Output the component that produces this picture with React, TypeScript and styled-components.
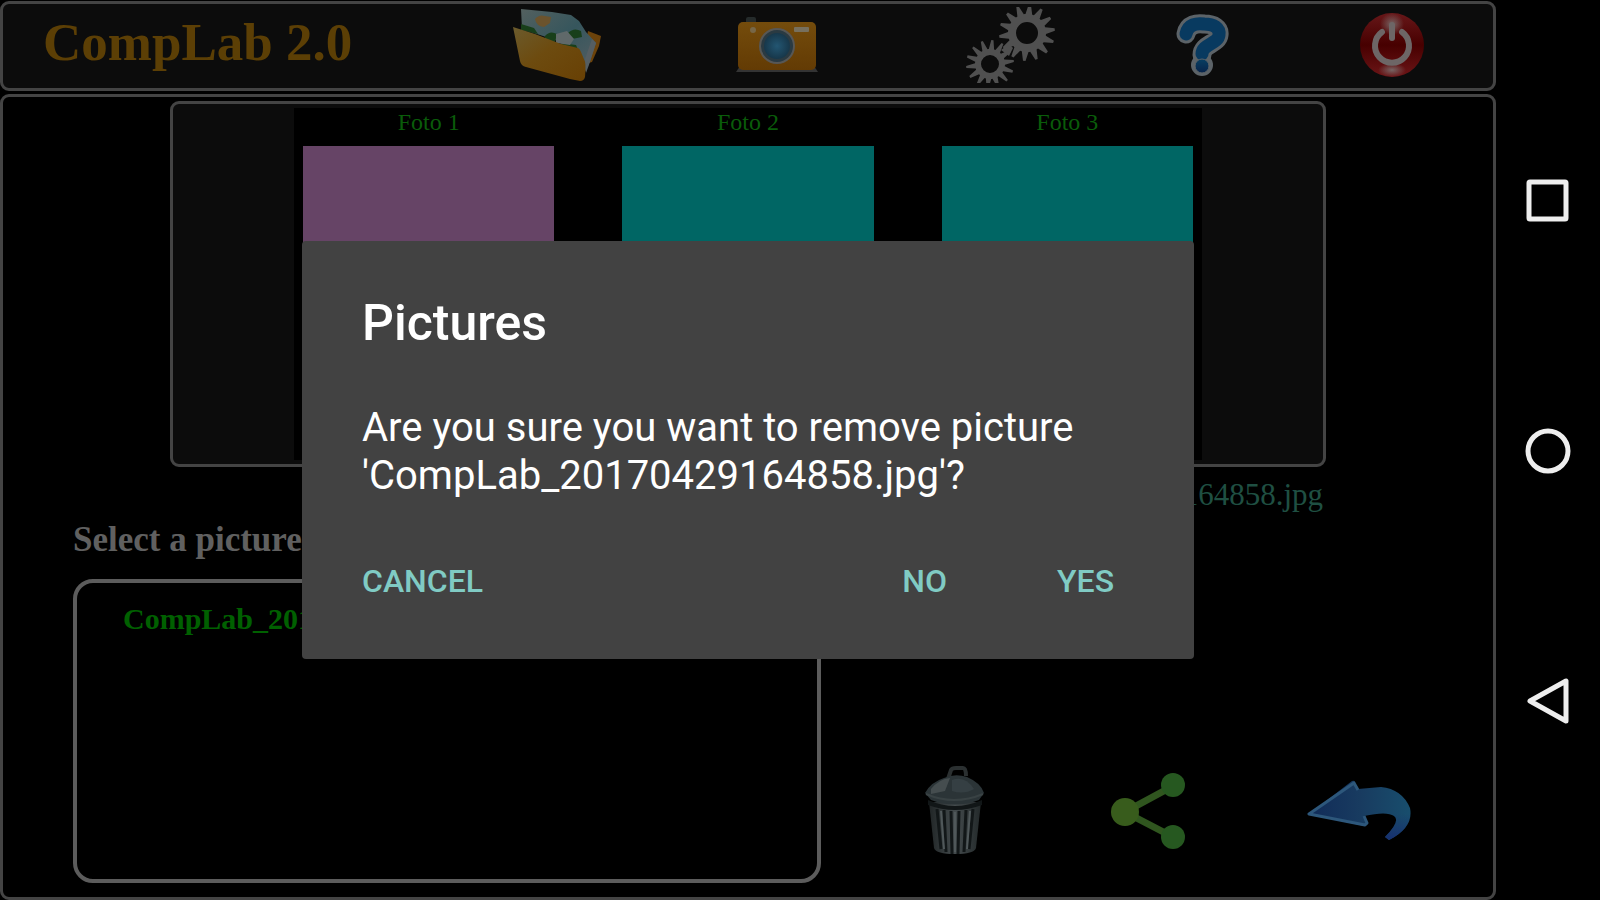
import React from "react";
import styled, { createGlobalStyle } from "styled-components";

const GlobalStyle = createGlobalStyle`
  * { box-sizing: border-box; }
  body { margin: 0; background: #000; }
  button { border: 0; padding: 0; background: none; cursor: pointer; }
`;

const serif = `"Liberation Serif", serif`;
const sans = `Roboto, "Liberation Sans", sans-serif`;

const Screen = styled.div`
  display: grid;
  grid-template-columns: 1fr 104px;
  min-height: 100vh;
  background: #000;
`;

const AppArea = styled.div`
  position: relative;
  display: flex;
  flex-direction: column;
  gap: 3px;
  min-width: 0;
  padding-top: 1px;
`;

const Toolbar = styled.header`
  display: grid;
  grid-template-columns: 464fr 180fr 260fr 208fr 176fr 202fr;
  align-items: center;
  height: 90px;
  padding-bottom: 2px;
  border: 3px solid #444;
  border-radius: 9px;
  background: #0c0c0c;
`;

const Brand = styled.h1`
  margin: 0;
  padding: 0 0 6px 40px;
  color: #5c3f05;
  font: 700 53px/56px ${serif};
  white-space: nowrap;
`;

const IconButton = styled.button`
  display: flex;
  justify-content: center;
  align-items: center;
  svg { display: block; }
`;

const Main = styled.main`
  flex: 1;
  display: flex;
  flex-direction: column;
  padding: 4px 0 14px 70px;
  border: 3px solid #444;
  border-radius: 9px;
`;

const Preview = styled.section`
  display: flex;
  justify-content: center;
  height: 366px;
  margin: 0 167px 0 97px;
  padding: 4px;
  border: 3px solid #444;
  border-radius: 9px;
  background: #0c0c0c;
`;

const Photos = styled.div`
  display: grid;
  grid-template-columns: repeat(3, 1fr);
  column-gap: 68px;
  width: 908px;
  max-width: 80%;
  padding: 0 9px;
  background: #000;
`;

const Photo = styled.figure`
  display: flex;
  flex-direction: column;
  margin: 0;
`;

const PhotoLabel = styled.figcaption`
  padding-bottom: 10px;
  color: #0a5c0a;
  font: 24px/28px ${serif};
  text-align: center;
`;

const Swatch = styled.div<{ $color: string }>`
  flex: 1;
  margin-bottom: 9px;
  background: ${(p) => p.$color};
`;

const FileName = styled.output`
  margin: 10px 170px 0 0;
  color: #1f4f42;
  font: 31px/36px ${serif};
  text-align: right;
`;

const ListLabel = styled.h2`
  margin: 7px 0 19px;
  color: #606060;
  font: 700 35px/40px ${serif};
`;

const Lower = styled.div`
  flex: 1;
  display: grid;
  grid-template-columns: 748fr 672fr;
`;

const FileList = styled.ul`
  margin: 0;
  padding: 18px 46px;
  border: 4px solid #5c5c5c;
  border-radius: 20px;
  list-style: none;
`;

const FileItem = styled.button`
  color: #006000;
  font: 700 30px/36px ${serif};
`;

const Actions = styled.div`
  display: grid;
  grid-template-columns: 228fr 158fr 266fr;
  align-content: end;
  align-items: center;
  padding: 0 0 27px 20px;
`;

const NavBar = styled.nav`
  display: flex;
  flex-direction: column;
  justify-content: space-around;
  padding: 76px 0 74px;
`;

const Overlay = styled.div`
  position: absolute;
  inset: 0;
  display: flex;
  align-items: center;
  justify-content: center;
`;

const Dialog = styled.div`
  width: 892px;
  max-width: 92%;
  padding: 52px 60px 46px;
  border-radius: 4px;
  background: #424242;
  color: #fff;
  font-family: ${sans};
`;

const DialogTitle = styled.h2`
  margin: 0 0 51px;
  font-size: 50px;
  line-height: 60px;
  font-weight: 500;
`;

const DialogText = styled.p`
  margin: 0 0 49px;
  font-size: 40px;
  line-height: 48px;
  overflow-wrap: anywhere;
`;

const DialogActions = styled.div`
  display: flex;
  gap: 110px;
  padding-right: 20px;
`;

const DialogButton = styled.button<{ $start?: boolean }>`
  margin-right: ${(p) => (p.$start ? "auto" : "0")};
  color: #80cbc4;
  font: 500 32px/64px ${sans};
`;

const gear = (cx: number, cy: number, outer: number, root: number, hole: number, teeth: number) => {
  const pts: string[] = [];
  for (let i = 0; i < teeth; i++) {
    const step = (Math.PI * 2) / teeth;
    [[-0.5, root], [-0.4, root], [-0.1, outer], [0.1, outer], [0.4, root]].forEach(([t, r]) => {
      const a = (i + t) * step - Math.PI / 2 + 0.1;
      pts.push(`${(cx + r * Math.cos(a)).toFixed(1)} ${(cy + r * Math.sin(a)).toFixed(1)}`);
    });
  }
  return `M${pts.join("L")}Z M${cx - hole} ${cy}a${hole} ${hole} 0 1 0 ${hole * 2} 0a${hole} ${hole} 0 1 0 ${-hole * 2} 0Z`;
};

const FolderIcon = () => (
  <svg width="90" height="76" viewBox="0 0 90 76" aria-hidden="true">
    <defs>
      <linearGradient id="folder" x1="0" y1="0" x2="1" y2="1">
        <stop offset="0" stopColor="#6b5b2d" />
        <stop offset=".45" stopColor="#6d4b0f" />
        <stop offset="1" stopColor="#684004" />
      </linearGradient>
      <linearGradient id="photo" x1="0" y1="0" x2="1" y2="1">
        <stop offset="0" stopColor="#53605f" />
        <stop offset=".5" stopColor="#36565d" />
        <stop offset="1" stopColor="#555e62" />
      </linearGradient>
    </defs>
    <path d="M76 24L89 29 87 39 80 55 70 58Z" fill="#6c430b" />
    <path d="M9 2L40 5 59 8 67 14 74 25 84 36 78 54 73 65 64 40 10 22Z" fill="url(#photo)" />
    <path d="M23 12Q27 7 33 9L39 10 38 16 32 20Q24 19 23 12Z" fill="#6b532d" />
    <path d="M9 17l13 4 4 6-17-4z M33 29q5-6 12-2l-2 8-10-2z M56 26q6-6 13-2l1 6-10 2z M49 36l15 2 3 7-18-5z" fill="#183f1a" />
    <path d="M44 27l11-3 7 8-4 6-14-2z" fill="#60696a" />
    <path d="M1 20L23 27 49 37 66 41Q68 42 69 45L74 57 73 70Q72 74 68 74L58 72 14 60Q9 59 8 54Z" fill="url(#folder)" />
    <path d="M73 52L80 32 84 36 78 55 74 66Z" fill="#555e62" />
  </svg>
);

const CameraIcon = () => (
  <svg width="82" height="58" viewBox="0 0 82 58" aria-hidden="true">
    <defs>
      <linearGradient id="body" x1="0" y1="0" x2="0" y2="1">
        <stop offset="0" stopColor="#744c0c" />
        <stop offset="1" stopColor="#633b04" />
      </linearGradient>
      <radialGradient id="lens">
        <stop offset="0" stopColor="#235672" />
        <stop offset="1" stopColor="#17374a" />
      </radialGradient>
    </defs>
    <rect x="10" y="1" width="10" height="8" rx="2" fill="#252b2b" />
    <path d="M0 56l4-6h74l4 6z" fill="#343434" />
    <rect x="2" y="6" width="78" height="48" rx="5" fill="url(#body)" />
    <circle cx="41" cy="30" r="18" fill="#575755" />
    <circle cx="41" cy="30" r="16" fill="#2a3a42" />
    <circle cx="41" cy="30" r="13" fill="url(#lens)" />
    <circle cx="17" cy="14" r="3" fill="#776747" />
    <rect x="58" y="11" width="15" height="5" rx="1" fill="#77705e" />
  </svg>
);

const GearsIcon = () => (
  <svg width="90" height="76" viewBox="0 0 90 76" aria-hidden="true">
    <g fill="#505050" fillRule="evenodd">
      <path d={gear(61, 26, 28, 19, 11, 14)} />
      <path d={gear(24, 57, 24, 15, 9, 14)} />
      <path d="M35 43l8-6 4 4-4 8z" />
    </g>
  </svg>
);

const HelpIcon = () => (
  <svg width="54" height="62" viewBox="0 0 54 62" aria-hidden="true">
    <defs>
      <linearGradient id="help" x1="0" y1="0" x2="0" y2="1">
        <stop offset="0" stopColor="#083f62" />
        <stop offset="1" stopColor="#08234a" />
      </linearGradient>
    </defs>
    <g fill="none" strokeLinecap="round" strokeLinejoin="round">
      <path d="M10 20C12 10 21 9 28 10C38 10 44 14 43 21C42 30 26 30 26 41" stroke="#5c6368" strokeWidth="19" />
      <circle cx="26" cy="51" r="11" fill="#5c6368" />
      <path d="M10 20C12 10 21 9 28 10C38 10 44 14 43 21C42 30 26 30 26 40" stroke="#083a60" strokeWidth="13" />
    </g>
    <circle cx="26" cy="52" r="7" fill="url(#help)" stroke="#5c6368" strokeWidth="1" />
  </svg>
);

const PowerIcon = () => (
  <svg width="64" height="64" viewBox="0 0 64 64" aria-hidden="true">
    <defs>
      <linearGradient id="red" x1="0" y1="0" x2="0" y2="1">
        <stop offset="0" stopColor="#671719" />
        <stop offset=".5" stopColor="#470000" />
        <stop offset="1" stopColor="#6c1517" />
      </linearGradient>
      <radialGradient id="shine">
        <stop offset="0" stopColor="#776463" />
        <stop offset="1" stopColor="#776463" stopOpacity="0" />
      </radialGradient>
    </defs>
    <circle cx="32" cy="32" r="32" fill="url(#red)" />
    <ellipse cx="32" cy="11" rx="12" ry="11" fill="url(#shine)" />
    <ellipse cx="32" cy="57" rx="14" ry="7" fill="url(#shine)" />
    <path d="M22 19A17 17 0 1 0 42 19" fill="none" stroke="#6d6666" strokeWidth="6" strokeLinecap="round" />
    <path d="M32 12v13" stroke="#6d6666" strokeWidth="6" strokeLinecap="round" />
  </svg>
);

const TrashIcon = () => (
  <svg width="62" height="90" viewBox="0 0 62 90" aria-hidden="true">
    <defs>
      <linearGradient id="can">
        <stop offset="0" stopColor="#202526" />
        <stop offset=".5" stopColor="#444b4d" />
        <stop offset="1" stopColor="#23292a" />
      </linearGradient>
    </defs>
    <path d="M5 36h52l-5 46q-2 6-21 6t-21-6z" fill="url(#can)" />
    <path d="M13 43l4 40M20 44l2 42M27 45l1 43M35 45l-1 43M42 44l-2 42M49 43l-4 40" stroke="#121718" strokeWidth="3" />
    <path d="M17 45l3 38M31 46v40M46 45l-3 38" stroke="#50585a" strokeWidth="2" />
    <path d="M4 34q27 12 54 0v5q-27 10-54 0z" fill="#111617" />
    <path d="M24 13l3-9q1-2 5-2h7q3 0 3 8" fill="none" stroke="#2b3031" strokeWidth="4" />
    <path d="M1 27Q7 16 20 12q11-5 23-1 14 6 17 16l-5 7q-24 9-48 0z" fill="#2b3437" />
    <path d="M7 23q8-10 19-11l-5 13-14 3z" fill="#454d4f" />
    <path d="M28 14q13-5 22 9-10 6-22 2z" fill="#353f43" />
    <path d="M2 28q28 12 57 0" fill="none" stroke="#394244" strokeWidth="2" />
  </svg>
);

const ShareIcon = () => (
  <svg width="74" height="76" viewBox="0 0 74 76" aria-hidden="true">
    <path d="M62 13L14 39 62 64" fill="none" stroke="#30561f" strokeWidth="7" />
    <circle cx="14" cy="39" r="14" fill="#385c1c" />
    <circle cx="62" cy="12" r="12" fill="#265820" />
    <circle cx="62" cy="64" r="12" fill="#265820" />
  </svg>
);

const BackIcon = () => (
  <svg width="106" height="64" viewBox="0 0 106 64" aria-hidden="true">
    <defs>
      <linearGradient id="arrow">
        <stop offset="0" stopColor="#112b58" />
        <stop offset=".5" stopColor="#183b60" />
        <stop offset="1" stopColor="#184e6d" />
      </linearGradient>
      <linearGradient id="tail" x1="0" y1="0" x2="0" y2="1">
        <stop offset=".5" stopColor="#1a3570" stopOpacity="0" />
        <stop offset="1" stopColor="#162f70" />
      </linearGradient>
    </defs>
    <path d="M2 35L45 2Q49 1 48 5L51 10 74 8Q95 10 103 29Q107 48 82 61L78 58Q94 42 87 37Q80 32 57 37L61 45 57 47Z" fill="url(#arrow)" />
    <path d="M74 8Q95 10 103 29Q107 48 82 61L78 58Q94 42 87 37Z" fill="url(#tail)" />
    <path d="M51 11L47 4 2 35 58 46 60 44 57 37" fill="none" stroke="#2d577b" strokeWidth="3" strokeLinejoin="round" />
  </svg>
);

const NavIcon = ({ children }: { children: React.ReactNode }) => (
  <svg width="46" height="50" viewBox="0 0 46 50" fill="none" stroke="#eee" strokeWidth="5" strokeLinejoin="round" aria-hidden="true">
    {children}
  </svg>
);

const photos = [
  { label: "Foto 1", color: "#664466" },
  { label: "Foto 2", color: "#006664" },
  { label: "Foto 3", color: "#006664" },
];

const file = "CompLab_20170429164858.jpg";

export default function App() {
  return (
    <Screen>
      <GlobalStyle />
      <AppArea>
        <Toolbar>
          <Brand>CompLab 2.0</Brand>
          <IconButton aria-label="Open pictures"><FolderIcon /></IconButton>
          <IconButton aria-label="Camera"><CameraIcon /></IconButton>
          <IconButton aria-label="Settings"><GearsIcon /></IconButton>
          <IconButton aria-label="Help"><HelpIcon /></IconButton>
          <IconButton aria-label="Exit"><PowerIcon /></IconButton>
        </Toolbar>
        <Main>
          <Preview>
            <Photos>
              {photos.map((p) => (
                <Photo key={p.label}>
                  <PhotoLabel>{p.label}</PhotoLabel>
                  <Swatch $color={p.color} />
                </Photo>
              ))}
            </Photos>
          </Preview>
          <FileName>{file}</FileName>
          <ListLabel>Select a picture</ListLabel>
          <Lower>
            <FileList>
              <li><FileItem>{file}</FileItem></li>
            </FileList>
            <Actions>
              <IconButton aria-label="Delete"><TrashIcon /></IconButton>
              <IconButton aria-label="Share"><ShareIcon /></IconButton>
              <IconButton aria-label="Back"><BackIcon /></IconButton>
            </Actions>
          </Lower>
        </Main>
        <Overlay>
          <Dialog role="dialog" aria-modal="true" aria-labelledby="dialog-title">
            <DialogTitle id="dialog-title">Pictures</DialogTitle>
            <DialogText>{`Are you sure you want to remove picture '${file}'?`}</DialogText>
            <DialogActions>
              <DialogButton $start>CANCEL</DialogButton>
              <DialogButton>NO</DialogButton>
              <DialogButton>YES</DialogButton>
            </DialogActions>
          </Dialog>
        </Overlay>
      </AppArea>
      <NavBar>
        <IconButton aria-label="Recent apps"><NavIcon><rect x="4" y="6" width="37" height="37" rx="1" /></NavIcon></IconButton>
        <IconButton aria-label="Home"><NavIcon><circle cx="23" cy="25" r="20" /></NavIcon></IconButton>
        <IconButton aria-label="System back"><NavIcon><path d="M41 5V45L5 25Z" /></NavIcon></IconButton>
      </NavBar>
    </Screen>
  );
}
